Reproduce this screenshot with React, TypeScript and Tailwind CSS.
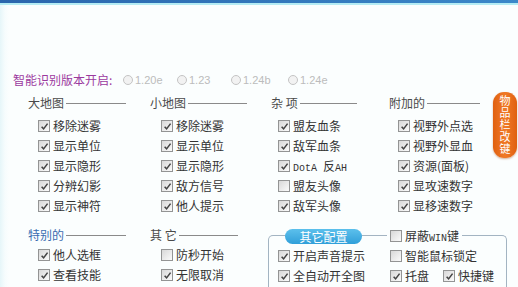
import React from "react";

type Item = { label: React.ReactNode; checked: boolean };

const CheckBox = ({ checked }: { checked: boolean }) => (
  <span className="w-[12px] h-[12px] shrink-0 border border-[#939494] bg-linear-to-br from-[#d8d8d8] to-[#fbfbfb] flex items-center justify-center">
    {checked && (
      <svg viewBox="0 0 10 10" className="w-[9px] h-[9px]">
        <path d="M1.8 5.2 L4 7.6 L8.4 1.8" stroke="#444" strokeWidth="1.7" fill="none" />
      </svg>
    )}
  </span>
);

const Check = ({ item, className = "" }: { item: Item; className?: string }) => (
  <div className={"h-[20px] flex items-center gap-[3px] " + className}>
    <CheckBox checked={item.checked} />
    <span className="whitespace-nowrap">{item.label}</span>
  </div>
);

const mono = (t: string) => <span className="font-['Liberation_Mono',monospace] text-[10px]">{t}</span>;

const Header = ({ title, line, blue }: { title: string; line: string; blue?: boolean }) => (
  <div className="h-[20px] flex items-center">
    <span className={"whitespace-pre " + (blue ? "text-[#3a6cb0]" : "text-[#4a4a4a]")}>{title}</span>
    <div className={"h-px bg-[#8a8a8a] ml-[2px] " + line} />
  </div>
);

const columns = [
  {
    title: "大地图",
    width: "w-[122px]",
    line: "w-[60px]",
    indent: "pl-[10px]",
    items: [
      { label: "移除迷雾", checked: true },
      { label: "显示单位", checked: true },
      { label: "显示隐形", checked: true },
      { label: "分辨幻影", checked: true },
      { label: "显示神符", checked: true },
    ],
  },
  {
    title: "小地图",
    width: "w-[121px]",
    line: "w-[59px]",
    indent: "pl-[11px]",
    items: [
      { label: "移除迷雾", checked: true },
      { label: "显示单位", checked: true },
      { label: "显示隐形", checked: true },
      { label: "敌方信号", checked: true },
      { label: "他人提示", checked: true },
    ],
  },
  {
    title: "杂 项",
    width: "w-[118px]",
    line: "w-[57px]",
    indent: "pl-[7px]",
    items: [
      { label: "盟友血条", checked: true },
      { label: "敌军血条", checked: true },
      {
        label: (
          <>
            {mono("DotA ")}反{mono("AH")}
          </>
        ),
        checked: true,
      },
      { label: "盟友头像", checked: false },
      { label: "敌军头像", checked: true },
    ],
  },
  {
    title: "附加的",
    width: "w-[100px]",
    line: "w-[53px]",
    indent: "pl-[9px]",
    items: [
      { label: "视野外点选", checked: true },
      { label: "视野外显血", checked: true },
      { label: "资源(面板)", checked: true },
      { label: "显攻速数字", checked: true },
      { label: "显移速数字", checked: true },
    ],
  },
];

const versions = [
  { v: "1.20e", w: "w-[54px]" },
  { v: "1.23", w: "w-[54px]" },
  { v: "1.24b", w: "w-[57px]" },
  { v: "1.24e", w: "w-[50px]" },
];

export default function App() {
  return (
    <div className="relative w-[518px] h-[287px] overflow-hidden bg-[linear-gradient(to_right,#e6f6f9_0px,#f6fcfd_5px,#fbfefe_9px)] font-['Noto_Sans_CJK_SC',sans-serif] text-[12px] text-[#333]">
      <div className="h-[3px] bg-linear-to-r from-[#2a66ad] to-[#3b88c9]" />
      <div className="h-[2px] bg-[#b4ecf4]" />

      <div className="mt-[65px] h-[20px] pl-[13px] flex items-center">
        <span className="text-[#9b3a9e] w-[110px]">智能识别版本开启:</span>
        {versions.map((r) => (
          <div key={r.v} className={"flex items-center gap-[2px] " + r.w}>
            <span className="w-[10px] h-[10px] rounded-full border border-[#c4c4c4] bg-[#f2f2f2]" />
            <span className="font-['Liberation_Sans',sans-serif] text-[11px] text-[#bcbcbc]">{r.v}</span>
          </div>
        ))}
      </div>

      <div className="mt-[3px] pl-[28px] flex">
        {columns.map((c) => (
          <div key={c.title} className={c.width}>
            <Header title={c.title} line={c.line} />
            <div className={"mt-[3px] " + c.indent}>
              {c.items.map((it, i) => (
                <Check key={i} item={it} className="h-[19.5px]" />
              ))}
            </div>
          </div>
        ))}
      </div>

      <div className="mt-[9px] pl-[28px] flex">
        <div className="w-[122px]">
          <Header title="特别的" line="w-[60px]" blue />
          <div className="pl-[10px]">
            <Check item={{ label: "他人选框", checked: true }} />
            <Check item={{ label: "查看技能", checked: true }} />
          </div>
        </div>
        <div className="w-[118px]">
          <Header title="其 它" line="w-[59px]" />
          <div className="pl-[11px]">
            <Check item={{ label: "防秒开始", checked: false }} />
            <Check item={{ label: "无限取消", checked: true }} />
          </div>
        </div>
        <div className="mt-[10px] mr-[11px] flex-1 h-[80px] border border-b-0 border-[#a3b4c2] rounded-t-[5px]">
          <div className="-mt-[10px] h-[20px] pl-[16px] flex items-center">
            <div className="w-[77px] h-[15px] rounded-full bg-linear-to-b from-[#5cc0ec] to-[#2f9fd9] text-white text-[12px] leading-[15px] text-center">
              其它配置
            </div>
            <div className="ml-[25px] px-[3px] bg-[#fbfefe]">
              <Check
                item={{
                  label: (
                    <>
                      屏蔽{mono("WIN")}键
                    </>
                  ),
                  checked: false,
                }}
              />
            </div>
          </div>
          <div className="pl-[9px] flex">
            <div className="w-[112px]">
              <Check item={{ label: "开启声音提示", checked: true }} />
              <Check item={{ label: "全自动开全图", checked: true }} />
            </div>
            <div>
              <Check item={{ label: "智能鼠标锁定", checked: false }} />
              <div className="flex">
                <Check item={{ label: "托盘", checked: true }} className="w-[53px]" />
                <Check item={{ label: "快捷键", checked: true }} />
              </div>
            </div>
          </div>
        </div>
      </div>

      <div className="absolute left-[493px] top-[92px] w-[24px] h-[66px] rounded-[11px] bg-linear-to-r from-[#e0600f] via-[#f07a26] to-[#e0600f] shadow-[0_1px_2px_rgba(150,60,0,0.4)] flex items-center justify-center">
        <span className="[writing-mode:vertical-rl] text-white text-[11px] leading-[12px] tracking-[1px]">物品栏改键</span>
      </div>
    </div>
  );
}
